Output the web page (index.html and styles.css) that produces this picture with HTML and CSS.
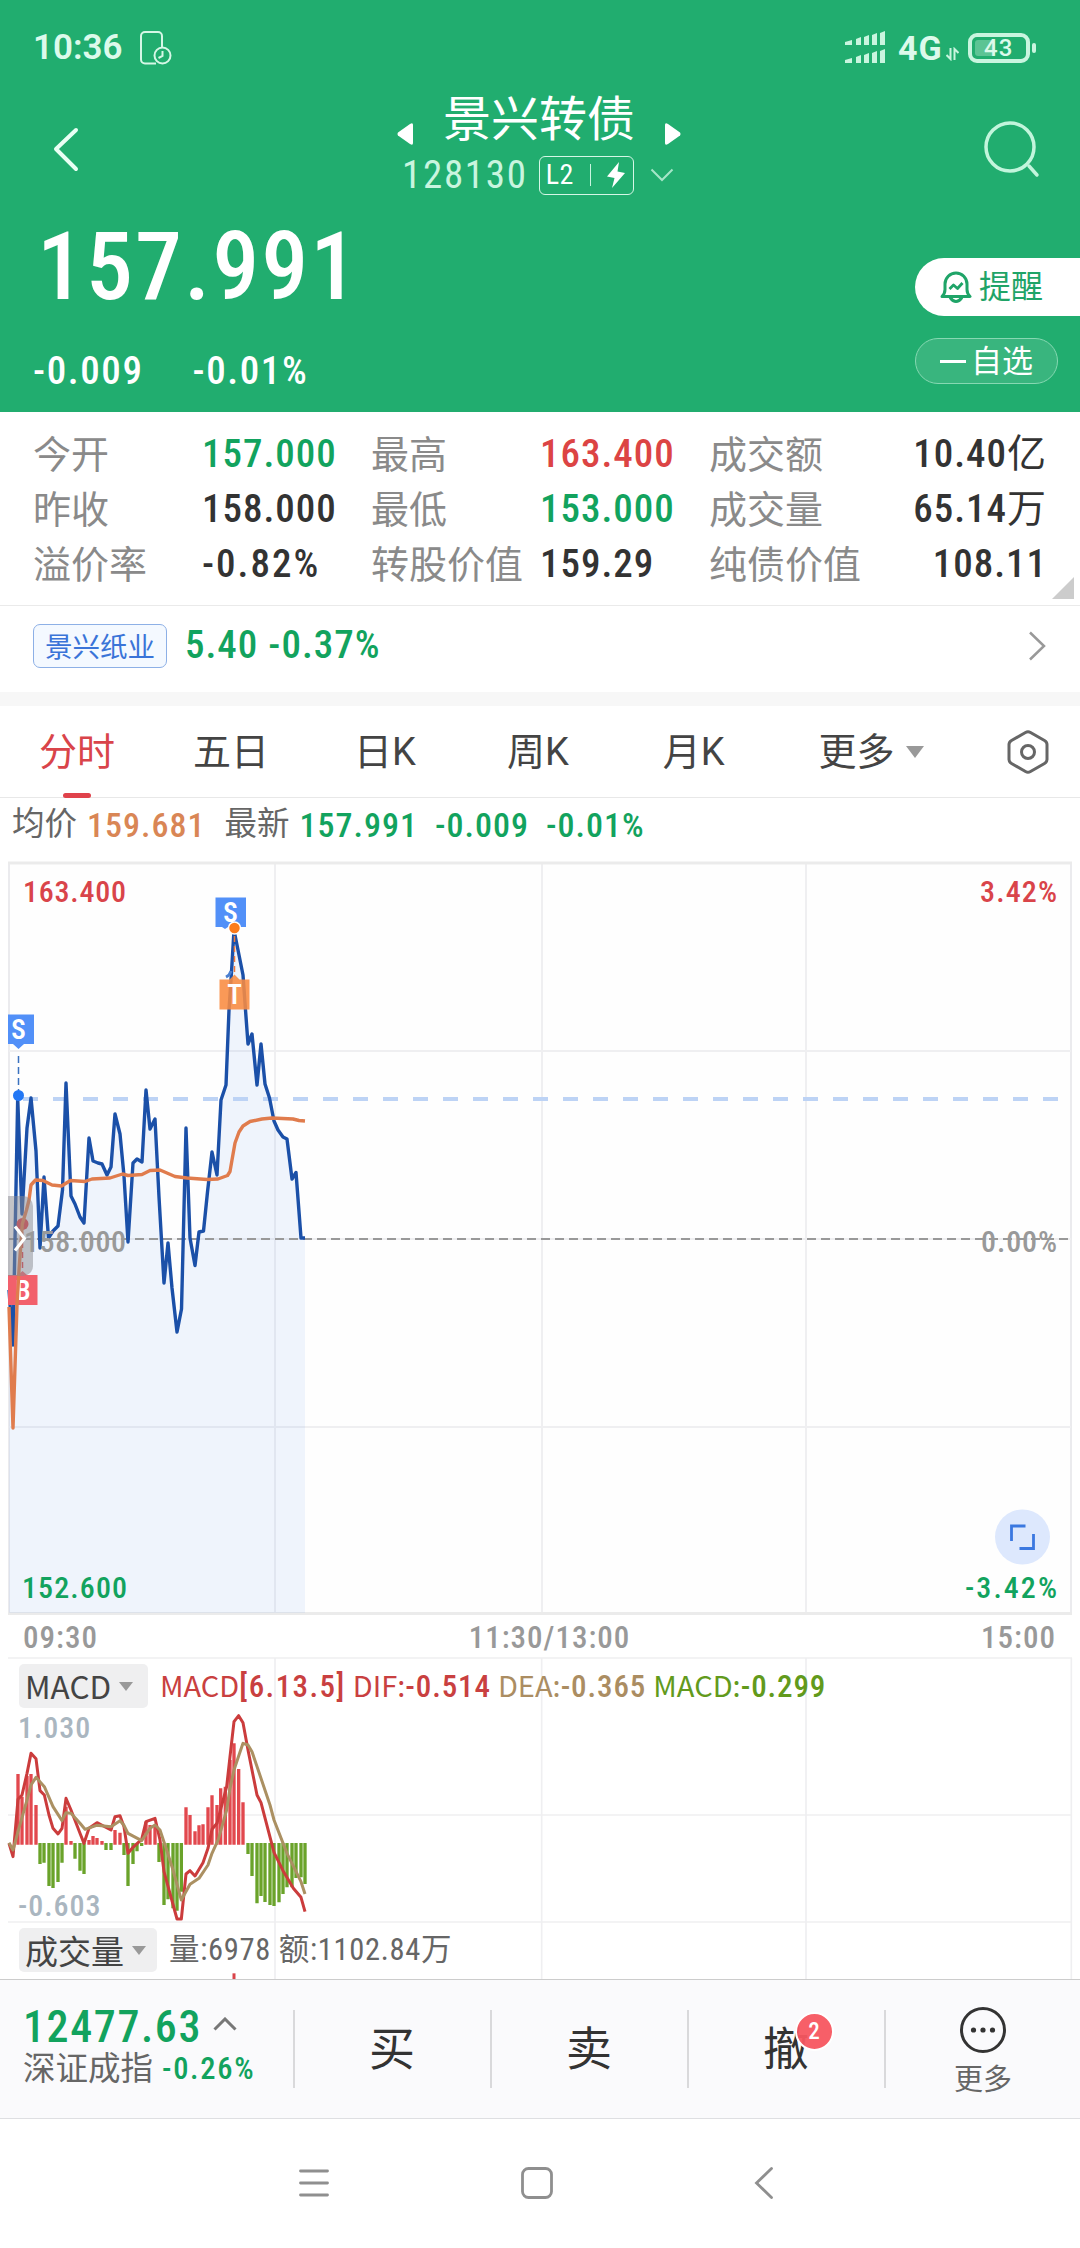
FILE: index.html
```html
<!DOCTYPE html>
<html lang="zh-CN">
<head>
    <meta charset="UTF-8">
    <meta name="viewport" content="width=device-width, initial-scale=1.0">
    <title>景兴转债 128130</title>
    <link rel="stylesheet" href="styles.css">
</head>
<body>

<header class="top">
    <div class="status-bar">
        <span class="clock">10:36</span>
        <svg class="screen-time" width="34" height="36" viewBox="0 0 34 36" fill="none" stroke="#d5f7e6" stroke-width="2">
            <path d="M17 33.500H6a4 4 0 0 1-4-4V6a4 4 0 0 1 4-4h13a4 4 0 0 1 4 4v11"/>
            <circle cx="23.500" cy="25.500" r="8"/>
            <path d="M23.500 21v5l-4 2"/>
        </svg>
        <svg class="signal" width="42" height="34" viewBox="0 0 42 34" fill="#c9f5df">
            <path d="M1 11l7-2v5H1zM12 8l5-2v8h-5zM20 6l5-2v10h-5zM28 4l5-2v12h-5zM36 2l5-2v14h-5z"/>
            <path d="M1 29l7-2v5H1zM12 26l5-2v8h-5zM20 24l5-2v10h-5zM28 22l5-2v12h-5zM36 20l5-2v14h-5z"/>
        </svg>
        <span class="network">4G</span>
        <svg class="updown" width="13" height="14" viewBox="0 0 13 14" fill="none" stroke="#c9f5df" stroke-width="2">
            <path d="M4.500 1v11L0.500 8M8.500 13V2l4 4"/>
        </svg>
        <span class="battery"><i class="level"></i><b>43</b></span>
    </div>

    <div class="title-bar">
        <svg class="back" width="30" height="48" viewBox="0 0 30 48" fill="none" stroke="#e9fff4" stroke-width="4" stroke-linecap="round" stroke-linejoin="round">
            <path d="M26 4L6 23l20 20"/>
        </svg>
        <div class="stock">
            <div class="stock-name">
                <svg width="16" height="22" viewBox="0 0 16 22" fill="#fff"><path d="M16 2v18q0 3-3 1L1 12.500q-1-1.500 0-3L13 1q3-2 3 1z"/></svg>
                <h1>景兴转债</h1>
                <svg width="16" height="22" viewBox="0 0 16 22" fill="#fff"><path d="M0 2v18q0 3 3 1l12-8.500q1-1.500 0-3L3 1Q0-1 0 2z"/></svg>
            </div>
            <div class="stock-code">
                <span>128130</span>
                <div class="level2">
                    <span>L2</span>
                    <i></i>
                    <svg width="18" height="26" viewBox="0 0 18 26" fill="#fff"><path d="M12 0L0 14.500l7.500 1.500L5 26 18 11l-7.500-1.500z"/></svg>
                </div>
                <svg width="24" height="14" viewBox="0 0 24 14" fill="none" stroke="#a5e6c8" stroke-width="2"><path d="M1.500 1.500L12 12 22.500 1.500"/></svg>
            </div>
        </div>
        <svg class="search" width="56" height="58" viewBox="0 0 56 58" fill="none" stroke="#c2f5dc" stroke-width="3.500" stroke-linecap="round">
            <circle cx="26" cy="27" r="24"/>
            <path d="M45 46l8 9"/>
        </svg>
    </div>

    <div class="quote">
        <div>
            <div class="price">157.991</div>
            <div class="change"><span>-0.009</span><span>-0.01%</span></div>
        </div>
        <div class="actions">
            <button class="remind">
                <svg width="32" height="34" viewBox="0 0 32 34" fill="none" stroke="#1fa468" stroke-width="3" stroke-linejoin="round">
                    <path d="M2 26.500q3-3 3-7V14a11 11 0 0 1 22 0v5.500q0 4 3 7z"/>
                    <path d="M10 27.500q6 8 12 0"/>
                    <path d="M9.500 19l4-4 4 3.500 5-5.500" stroke-width="2.800"/>
                </svg>
                提醒
            </button>
            <button class="favorite"><i></i>自选</button>
        </div>
    </div>
</header>

<section class="stats">
    <div class="cell"><span class="label">今开</span><span class="num green">157.000</span></div>
    <div class="cell"><span class="label">最高</span><span class="num red">163.400</span></div>
    <div class="cell last"><span class="label">成交额</span><span><span class="num">10.40</span>亿</span></div>
    <div class="cell"><span class="label">昨收</span><span class="num">158.000</span></div>
    <div class="cell"><span class="label">最低</span><span class="num green">153.000</span></div>
    <div class="cell last"><span class="label">成交量</span><span><span class="num">65.14</span>万</span></div>
    <div class="cell"><span class="label">溢价率</span><span class="num wide">-0.82%</span></div>
    <div class="cell"><span class="label">转股价值</span><span class="num">159.29</span></div>
    <div class="cell last"><span class="label">纯债价值</span><span class="num">108.11</span></div>
    <i class="expand"></i>
</section>

<section class="related">
    <span class="related-name">景兴纸业</span>
    <span class="num green">5.40 -0.37%</span>
    <svg width="18" height="30" viewBox="0 0 18 30" fill="none" stroke="#999" stroke-width="2.500"><path d="M2 1.500L16 15 2 28.500"/></svg>
</section>

<nav class="tabs">
    <a class="active">分时</a>
    <a>五日</a>
    <a>日K</a>
    <a>周K</a>
    <a>月K</a>
    <a class="more">更多 <i class="caret"></i></a>
    <svg width="42" height="44" viewBox="0 0 42 44" fill="none" stroke="#666" stroke-width="3" stroke-linejoin="round">
        <path d="M18.500 2.500q2.500-1.500 5 0l14 8q2.500 1.500 2.500 4v15q0 2.500-2.500 4l-14 8q-2.500 1.500-5 0l-14-8Q2 32 2 29.500v-15q0-2.500 2.500-4z"/>
        <circle cx="21" cy="22" r="6.500"/>
    </svg>
</nav>

<div class="summary">
    <span class="label">均价</span><span class="num orange">159.681</span>
    <span class="label latest">最新</span><span class="num green">157.991</span>
    <span class="num green diff">-0.009</span><span class="num green diff">-0.01%</span>
</div>

<svg class="chart" width="1080" height="760" viewBox="0 860 1080 760">
    <!-- grid -->
    <rect x="9" y="863" width="1062" height="750.500" class="plot"/>
    <path class="grid" d="M9 1051H1071M9 1239H1071M9 1427H1071M275 863V1613M542 863V1613M806 863V1613"/>
    <path class="frame" d="M8 863H1072M8 1613.500H1072"/>

    <!-- price area and line -->
    <path class="area" d="M9 1290L13 1345 17.700 1098 22 1214 27 1128 31 1098 36 1151 40 1248 44 1177 48.500 1238 53 1231 58 1226 62.500 1190 66 1083 71 1196 75 1204 80 1217 84 1223 89 1138 93 1161 98 1163 102 1164 107 1175 111 1167 115 1114 120 1134 124 1176 128 1242 133 1163 137 1159 142 1162 146 1090 150 1129 155 1119 159 1197 164 1283 168 1243 172 1288 177 1332 181.500 1309 186 1128 190 1238 195 1265.500 199 1232 203.500 1231 207.500 1192 212 1152 217 1175 221 1100 226 1085 229 1010 231.500 972 234 930 239 955 243 975 245.500 1010 248 1044 252 1034 257 1085 261 1044 265 1084 269.500 1098 274 1121 278 1130 283 1137 287 1139 292 1179 296 1172.500 301 1238 305 1238V1613H9z"/>
    <path class="last-trade" d="M23 1099H1071"/>
    <path class="prev-close" d="M9 1239H1071"/>
    <polyline class="price-line" points="9,1290 13,1345 17.7,1098 22,1214 27,1128 31,1098 36,1151 40,1248 44,1177 48.5,1238 53,1231 58,1226 62.5,1190 66,1083 71,1196 75,1204 80,1217 84,1223 89,1138 93,1161 98,1163 102,1164 107,1175 111,1167 115,1114 120,1134 124,1176 128,1242 133,1163 137,1159 142,1162 146,1090 150,1129 155,1119 159,1197 164,1283 168,1243 172,1288 177,1332 181.5,1309 186,1128 190,1238 195,1265.5 199,1232 203.5,1231 207.5,1192 212,1152 217,1175 221,1100 226,1085 229,1010 231.5,972 234,930 239,955 243,975 245.5,1010 248,1044 252,1034 257,1085 261,1044 265,1084 269.5,1098 274,1121 278,1130 283,1137 287,1139 292,1179 296,1172.5 301,1238 305,1238"/>

    <!-- buy marker -->
    <g>
        <circle cx="22.500" cy="1224" r="6" fill="#e23b45"/>
        <path d="M22.500 1232v40" stroke="#e23b45" stroke-width="1.500" stroke-dasharray="6 4"/>
        <path d="M8 1275h10l4.500-4 4.500 4h10.500v30H8z" fill="#f2606c"/>
        <text class="marker" x="23.500" y="1300">B</text>
    </g>
    <polyline class="avg-line" points="9,1307 13,1428 17,1305 19,1270 22.3,1224 26.500,1210 29,1200 31,1185 35.500,1180 43,1180.500 52,1185 61.500,1186 70.500,1180.500 85,1181.500 92,1179 110,1178 122.500,1174 128,1175.500 142,1174.500 150,1170.500 160,1170 175,1176.500 187,1178 207,1179.500 218,1179 227.500,1175.500 230,1171.500 232,1160 235,1143 239,1132 243,1126 250,1121.500 262,1119 272,1118 293,1119 299,1120.500 305,1121"/>

    <!-- sell and T markers -->
    <path d="M18.500 1056v36" stroke="#3a72c0" stroke-width="1.500" stroke-dasharray="7 4"/>
    <circle cx="18.500" cy="1095.500" r="5.500" fill="#2277f5"/>
    <path d="M8 1014.500h26v29.500h-10l-5.500 5-5.500-5H8z" fill="#5290f8"/>
    <text class="marker" x="19" y="1039">S</text>

    <path d="M215.500 897.500h30.500V927h-18l-3 2-3-2h-6.500z" fill="#5290f8"/>
    <text class="marker" x="231" y="922">S</text>
    <path d="M226 977q4-2 5-6" fill="none" stroke="#4a7fd0" stroke-width="3"/>
    <path d="M234.500 936v38" stroke="#f07a3c" stroke-width="1.500" stroke-dasharray="6 4"/>
    <path d="M219.500 979.500h10l5-5 5 5h10V1009.500h-30z" fill="#f98b40" fill-opacity=".88"/>
    <text class="marker" x="235" y="1004">T</text>
    <circle cx="234.500" cy="928" r="6" fill="#fb7b1e" stroke="#fff" stroke-width="1.500"/>

    <!-- side handle -->
    <path d="M8 1196h15a10 10 0 0 1 10 10v60a10 10 0 0 1-10 10H8z" fill="#8a8a90" fill-opacity=".5"/>
    <path d="M15 1226.500l9.500 12-9.500 12" fill="none" stroke="#fff" stroke-width="3"/>

    <text class="axis-text red" x="23" y="902" textLength="104">163.400</text>
    <text class="axis-text green" x="22" y="1598" textLength="106">152.600</text>
    <text class="axis-text grey" x="24" y="1252" textLength="103">158.000</text>
    <text class="axis-text red end" x="1058" y="902" textLength="78">3.42%</text>
    <text class="axis-text grey end" x="1058" y="1252" textLength="77">0.00%</text>
    <text class="axis-text green end" x="1058" y="1598" textLength="93">-3.42%</text>

    <circle cx="1022.500" cy="1537" r="27.500" fill="#dde8fd"/>
    <path d="M1011.500 1541v-15h14M1033.500 1534v14.500h-14" fill="none" stroke="#3b78e0" stroke-width="2.800"/>
</svg>

<div class="time-axis">
    <span>09:30</span><span>11:30/13:00</span><span>15:00</span>
</div>

<section class="indicators">
    <!-- units are thirds of a pixel -->
    <svg class="macd-chart" width="1080" height="322" viewBox="0 51 3240 966">
        <path class="macd-grid" d="M24 54H3216M24 525H3216M24 846H3216M825 54V1020M1625 54V1020M2418 54V1020M3214 54V1020"/>
        <path class="bar-red" d="M54 614V402M66 614V470M81 614V408M93 614V402M108 614V495M198 614V500M213 614V603M267 614V600M279 614V588M291 614V594M306 614V603M345 614V570M360 614V578M438 614V545M450 614V555M465 614V560M558 614V502M570 614V525M585 614V574M597 614V556M609 614V553M624 614V502M636 614V466M651 614V495M662 614V445M676 614V440M690 614V360M702 614V310M716 614V387M729 614V487"/>
        <path class="bar-green" d="M120 609V672M132 609V668M147 609V738M159 609V744M174 609V726M186 609V668M225 609V656M240 609V692M252 609V702M318 609V630M333 609V630M372 609V645M384 609V738M399 609V672M411 609V634M425 609V618M477 609V666M492 609V795M504 609V778M519 609V805M531 609V812M544 609V755M744 609V642M756 609V708M771 609V790M783 609V768M795 609V786M810 609V795M822 609V798M837 609V787M849 609V762M861 609V742M876 609V742M888 609V714M903 609V712M915 609V732"/>
        <polyline class="dif" points="27,610 39,650 54,478 66,465 81,400 93,340 108,356 120,452 133,465 147,525 159,565 174,582 186,565 198,475 213,510 240,580 252,610 267,565 291,548 333,570 345,530 360,527 372,560 384,640 399,622 425,598 438,545 465,535 480,600 492,695 531,837 544,837 558,702 570,692 585,708 609,668 624,625 636,568 651,550 680,440 690,350 702,245 716,227 729,248 744,330 771,465 783,488 822,637 849,692 880,745 903,772 915,815"/>
        <polyline class="dea" points="27,608 39,630 54,575 81,480 93,435 108,412 133,440 159,500 186,542 198,518 213,520 240,550 255,568 290,556 333,560 360,542 372,556 384,580 425,602 450,565 465,555 480,570 500,630 519,690 544,780 570,733 597,715 624,675 636,640 655,598 680,510 690,445 702,390 718,342 729,310 744,315 756,335 810,495 822,540 861,640 903,725 915,762"/>
        <path d="M702 1000v20" stroke="#d9444a" stroke-width="9"/>
    </svg>
    <div class="indicator-head">
        <span class="picker">MACD <i class="caret"></i></span>
        <span class="dif-text">MACD<b class="params">[6.13.5]</b></span>
        <span class="dif-text">DIF:<b>-0.514</b></span>
        <span class="dea-text">DEA:<b>-0.365</b></span>
        <span class="macd-text">MACD:<b>-0.299</b></span>
    </div>
    <div class="scale">
        <span>1.030</span>
        <span>-0.603</span>
    </div>
    <div class="indicator-head">
        <span class="picker volume">成交量 <i class="caret"></i></span>
        <span class="volume-text">量:6978 额:1102.84万</span>
    </div>
</section>

<footer class="trade-bar">
    <div class="index">
        <div class="index-value">12477.63
            <svg width="24" height="14" viewBox="0 0 24 14" fill="none" stroke="#777" stroke-width="3"><path d="M1.500 12.500L12 2l10.500 10.500"/></svg>
        </div>
        <div class="index-name">深证成指 <span>-0.26%</span></div>
    </div>
    <a class="trade">买</a>
    <a class="trade">卖</a>
    <a class="trade">撤<b class="badge">2</b></a>
    <a class="trade-more">
        <svg width="48" height="48" viewBox="0 0 48 48" fill="#333">
            <circle cx="24" cy="24" r="21.500" fill="none" stroke="#333" stroke-width="3"/>
            <circle cx="14.500" cy="24" r="2.600"/><circle cx="24" cy="24" r="2.600"/><circle cx="33.500" cy="24" r="2.600"/>
        </svg>
        更多
    </a>
</footer>

<div class="system-nav">
    <svg width="30" height="32" viewBox="0 0 30 32" stroke="#8f8f8f" stroke-width="2.800" stroke-linecap="round"><path d="M1.500 4h27M1.500 16h27M1.500 28h27"/></svg>
    <svg width="34" height="34" viewBox="0 0 34 34" fill="none" stroke="#8f8f8f" stroke-width="2.800"><rect x="2.500" y="2.500" width="29" height="29" rx="6"/></svg>
    <svg width="20" height="34" viewBox="0 0 20 34" fill="none" stroke="#8f8f8f" stroke-width="2.800" stroke-linecap="round"><path d="M17.500 2.500L2.500 17l15 14.500"/></svg>
</div>

</body>
</html>
```
FILE: styles.css
```css
/* Global styles */

* {
  box-sizing: border-box;
  margin: 0;
  padding: 0;
}

body {
  width: 1080px;
  height: 2248px;
  overflow: hidden;
  font-family: Roboto, "Noto Sans CJK SC", sans-serif;
  font-stretch: 85%;
  font-size: 39px;
  line-height: 1;
  letter-spacing: 1px;
  color: #333;
  background-color: #fff;
}

svg {
  display: block;
  flex: none;
}

button {
  font: inherit;
}

.num { font-weight: 500; }
.wide { letter-spacing: 2px; }
.green { color: #12a35e; }
.red { color: #dc4444; }
.orange { color: #d98655; }

.caret {
  display: inline-block;
  border: 9.5px solid transparent;
  border-top: 12px solid #999;
  border-bottom: 0;
}

/* Green header */

.top {
  height: 412px;
  background-color: #21ad6f;
  color: #fff;
}

.status-bar {
  display: flex;
  align-items: center;
  height: 95px;
  padding-left: 33px;
  color: #dcfaeb;
}

.clock {
  font-size: 35px;
  font-weight: 600;
  font-stretch: 100%;
  letter-spacing: 0;
  width: 106px;
}

.signal {
  margin-left: 671px;
}

.network {
  margin-left: 12px;
  font-size: 34px;
  font-weight: 700;
  font-stretch: 100%;
}

.updown {
  margin: 13px 0 0 3px;
}

.battery {
  position: relative;
  display: flex;
  align-items: center;
  justify-content: center;
  width: 62px;
  height: 30px;
  margin-left: 9px;
  border: 4px solid #c9f5df;
  border-radius: 9px;
  font-size: 24px;
}

.battery b {
  position: relative;
  font-weight: 500;
  font-stretch: 100%;
}

.battery .level {
  position: absolute;
  left: 3px;
  top: 3px;
  width: 20px;
  height: 16px;
  border-radius: 3px;
  background-color: #5cc494;
}

.battery::after {
  content: "";
  position: absolute;
  left: 60px;
  top: 6px;
  width: 4px;
  height: 10px;
  border-radius: 2px;
  background-color: #c9f5df;
}

.title-bar {
  display: flex;
  justify-content: space-between;
  height: 118px;
  padding: 0 40px 0 50px;
}

.back {
  margin-top: 31px;
}

.search {
  margin: 25px 0 0;
}

.stock {
  margin-left: 14px;
}

.stock-name {
  display: flex;
  justify-content: center;
  align-items: center;
  height: 50px;
  letter-spacing: 0;
}

.stock-name h1 {
  font-size: 48px;
  font-weight: 400;
  margin: 0 30px;
}

.stock-name svg {
  margin-top: 28px;
}

.stock-code {
  display: flex;
  align-items: center;
  height: 40px;
  margin: 10px 0 0 5px;
  color: #c9f5df;
  letter-spacing: 1.7px;
}

.level2 {
  display: flex;
  align-items: center;
  width: 95px;
  height: 39px;
  margin: 0 16px 0 11px;
  padding: 0 8px 0 6px;
  border: 1.5px solid #d5f7e6;
  border-radius: 6px;
  color: #fff;
  font-size: 28px;
  letter-spacing: 0.5px;
}

.level2 i {
  flex: none;
  width: 1.5px;
  height: 22px;
  margin: 0 auto;
  background-color: #c9f5df;
}

.quote {
  display: flex;
  justify-content: space-between;
}

.price {
  height: 106px;
  padding: 7px 0 0 37px;
  font-size: 94px;
  font-weight: 500;
  letter-spacing: 2px;
}

.change {
  display: flex;
  gap: 49px;
  margin-top: 33px;
  padding-left: 33px;
  font-weight: 500;
  letter-spacing: 1.6px;
}

.actions {
  width: 165px;
  padding-top: 45px;
  letter-spacing: 0;
}

.remind {
  display: flex;
  align-items: center;
  width: 165px;
  height: 58px;
  padding-left: 25px;
  gap: 7px;
  border: 0;
  border-radius: 29px 0 0 29px;
  background-color: #fff;
  color: #1fa468;
  font-size: 32px;
}

.favorite {
  display: flex;
  align-items: center;
  width: 143px;
  height: 46px;
  margin-top: 22px;
  padding-left: 24px;
  gap: 5px;
  border: 1.5px solid #86d8b2;
  border-radius: 23px;
  background-color: #39b57e;
  color: #fff;
  font-size: 31px;
}

.favorite i {
  width: 26px;
  height: 3px;
  background-color: #fff;
}

/* Quote details */

.stats {
  position: relative;
  display: grid;
  grid-template-columns: 338px 338px 338px;
  grid-auto-rows: 55px;
  height: 194px;
  padding: 15px 0 0 33px;
  border-bottom: 1px solid #eaeaea;
}

.cell {
  display: flex;
  align-items: center;
}

.cell .label {
  width: 169px;
  font-size: 38px;
  letter-spacing: 0;
  color: #8a8a8a;
  white-space: nowrap;
}

.cell.last {
  justify-content: space-between;
}

.expand {
  position: absolute;
  right: 6px;
  bottom: 6px;
  border-left: 22px solid transparent;
  border-bottom: 22px solid #ccc;
}

.related {
  display: flex;
  align-items: center;
  height: 100px;
  padding: 0 34px 7px 33px;
  border-bottom: 14px solid #f7f7f7;
  gap: 18px;
}

.related-name {
  width: 134px;
  height: 44px;
  border: 1.5px solid #8db0e6;
  border-radius: 7px;
  background-color: #f4f9ff;
  color: #3a74d8;
  font-size: 27.5px;
  line-height: 45px;
  letter-spacing: 0;
  text-align: center;
}

.related svg {
  margin-left: auto;
}

/* Period tabs */

.tabs {
  position: relative;
  display: flex;
  align-items: center;
  height: 92px;
  padding: 0 31px 0 39px;
  border-bottom: 1px solid #e8e8e8;
  font-size: 38px;
  font-stretch: 100%;
  letter-spacing: 0;
  color: #444;
}

.tabs a {
  margin-right: 78px;
}

.tabs a:nth-child(2) { margin-right: 85px; }
.tabs a:nth-child(3) { margin-right: 91px; }
.tabs a:nth-child(4) { margin-right: 94px; }
.tabs a:nth-child(5) { margin-right: 94px; }

.tabs a.more {
  display: flex;
  align-items: center;
  gap: 11px;
  margin-right: auto;
}

.tabs .active {
  position: relative;
  color: #d9444a;
}

.tabs .active::after {
  content: "";
  position: absolute;
  left: 24px;
  top: 60px;
  width: 28px;
  height: 5px;
  border-radius: 3px;
  background-color: #e0424b;
}

.summary {
  display: flex;
  align-items: center;
  height: 62px;
  padding: 0 0 9px 12px;
  font-size: 34px;
}

.summary .label {
  margin-right: 10px;
  font-size: 32.5px;
  letter-spacing: 0;
  color: #666;
}

.summary .latest {
  margin-left: 19px;
}

.summary .diff {
  margin-left: 17px;
}

/* Intraday chart */

.plot {
  fill: #fefefe;
  stroke: #ebebee;
  stroke-width: 2;
}

.grid {
  stroke: #efeff1;
  stroke-width: 2;
}

.frame {
  stroke: #ebebeb;
  stroke-width: 3;
}

.area {
  fill: #5b8ee8;
  fill-opacity: 0.09;
}

.price-line,
.avg-line {
  fill: none;
  stroke: #1b50a8;
  stroke-width: 3.4;
  stroke-linejoin: round;
}

.avg-line {
  stroke: #e07c4d;
}

.last-trade {
  stroke: #bdd3f5;
  stroke-width: 4;
  stroke-dasharray: 15 15;
}

.prev-close {
  stroke: #999;
  stroke-width: 2;
  stroke-dasharray: 9 5;
}

.marker {
  fill: #fff;
  font-size: 27px;
  font-weight: 600;
  text-anchor: middle;
}

.axis-text {
  font-size: 30px;
  font-weight: 500;
}

.axis-text.red { fill: #d9444a; }
.axis-text.green { fill: #12a35e; }
.axis-text.grey { fill: #999; }
.axis-text.end { text-anchor: end; }

.time-axis {
  display: flex;
  justify-content: space-between;
  align-items: center;
  height: 37px;
  padding: 0 24px 3px 23px;
  font-size: 31px;
  font-weight: 500;
  color: #999;
}

.time-axis span:nth-child(2) {
  margin-left: 20px;
}

/* MACD and volume */

.indicators {
  position: relative;
  height: 322px;
  overflow: hidden;
}

.macd-chart {
  position: absolute;
  left: 0;
  top: 0;
}

.macd-grid {
  stroke: #efeff1;
  stroke-width: 5;
}

.bar-red {
  stroke: #e2484e;
  stroke-width: 10;
}

.bar-green {
  stroke: #6aa32a;
  stroke-width: 10;
}

.dif,
.dea {
  fill: none;
  stroke: #cb3c3c;
  stroke-width: 9;
  stroke-linejoin: round;
}

.dea {
  stroke: #ab9062;
}

.indicator-head {
  position: relative;
  display: flex;
  align-items: center;
  height: 44px;
  margin-top: 7px;
  padding-left: 19px;
  font-size: 31px;
}

.picker {
  display: flex;
  align-items: center;
  width: 129px;
  height: 44px;
  margin-right: 12px;
  padding-left: 6px;
  gap: 8px;
  border-radius: 5px;
  background-color: #efeff0;
  font-family: "Noto Sans CJK SC", sans-serif;
  font-size: 31.5px;
  letter-spacing: 0;
  color: #444;
}

.picker .caret {
  border-width: 9px 7px 0;
}

.picker.volume {
  width: 138px;
  font-size: 33px;
}

.dif-text,
.dea-text,
.macd-text {
  margin-right: 7px;
  font-family: "Noto Sans CJK SC", sans-serif;
  font-size: 29px;
  letter-spacing: 0;
  color: #c94040;
}

.indicator-head b {
  font-family: Roboto, sans-serif;
  font-size: 31px;
  font-weight: 500;
  letter-spacing: 0.9px;
}

.indicator-head .params {
  letter-spacing: 1.4px;
}

.dif-text { color: #c94040; }
.dea-text { color: #ab8d62; }
.macd-text { color: #629a1c; }

.scale {
  position: relative;
  display: flex;
  flex-direction: column;
  justify-content: space-between;
  height: 213px;
  padding: 5px 0 0 18px;
  font-size: 30px;
  font-weight: 500;
  color: #aab6c0;
}

.volume-text {
  font-size: 30.5px;
  letter-spacing: 0.7px;
  color: #666;
}

/* Bottom bars */

.trade-bar {
  display: flex;
  height: 140px;
  border-top: 1px solid #ccc;
  border-bottom: 1px solid #dedfe2;
  background-color: #fafafc;
}

.index {
  width: 293px;
  padding: 25px 0 0 23px;
}

.index-value {
  display: flex;
  align-items: center;
  gap: 11px;
  font-size: 44px;
  font-weight: 500;
  letter-spacing: 1.6px;
  color: #12a35e;
}

.index-value svg {
  margin-bottom: 6px;
}

.index-name {
  display: flex;
  align-items: center;
  margin-top: 4px;
  gap: 9px;
  font-size: 32.5px;
  letter-spacing: 0;
  color: #666;
}

.index-name span {
  font-size: 30.5px;
  font-weight: 500;
  letter-spacing: 1.7px;
  color: #12a35e;
}

.trade {
  position: relative;
  width: 197px;
  height: 78px;
  margin-top: 30px;
  border-left: 2px solid #d9d9db;
  font-size: 46px;
  line-height: 79px;
  text-align: center;
}

.badge {
  position: absolute;
  left: 106px;
  top: 2px;
  width: 39px;
  height: 39px;
  border: 2px solid #fff;
  border-radius: 50%;
  background-color: rgba(247, 86, 96, 0.95);
  color: #fff;
  font-size: 23px;
  font-weight: 500;
  line-height: 35px;
}

.trade-more {
  display: flex;
  flex-direction: column;
  align-items: center;
  flex: 1;
  height: 78px;
  margin-top: 30px;
  border-left: 2px solid #d9d9db;
  font-size: 29px;
  gap: 12px;
  letter-spacing: 0;
  color: #666;
}

.trade-more svg {
  margin-top: -4px;
}

.system-nav {
  display: flex;
  align-items: center;
  justify-content: center;
  height: 129px;
  padding: 0 8px 2px 0;
  gap: 191px;
}

.system-nav svg:last-child {
  margin-left: 9px;
}
```
